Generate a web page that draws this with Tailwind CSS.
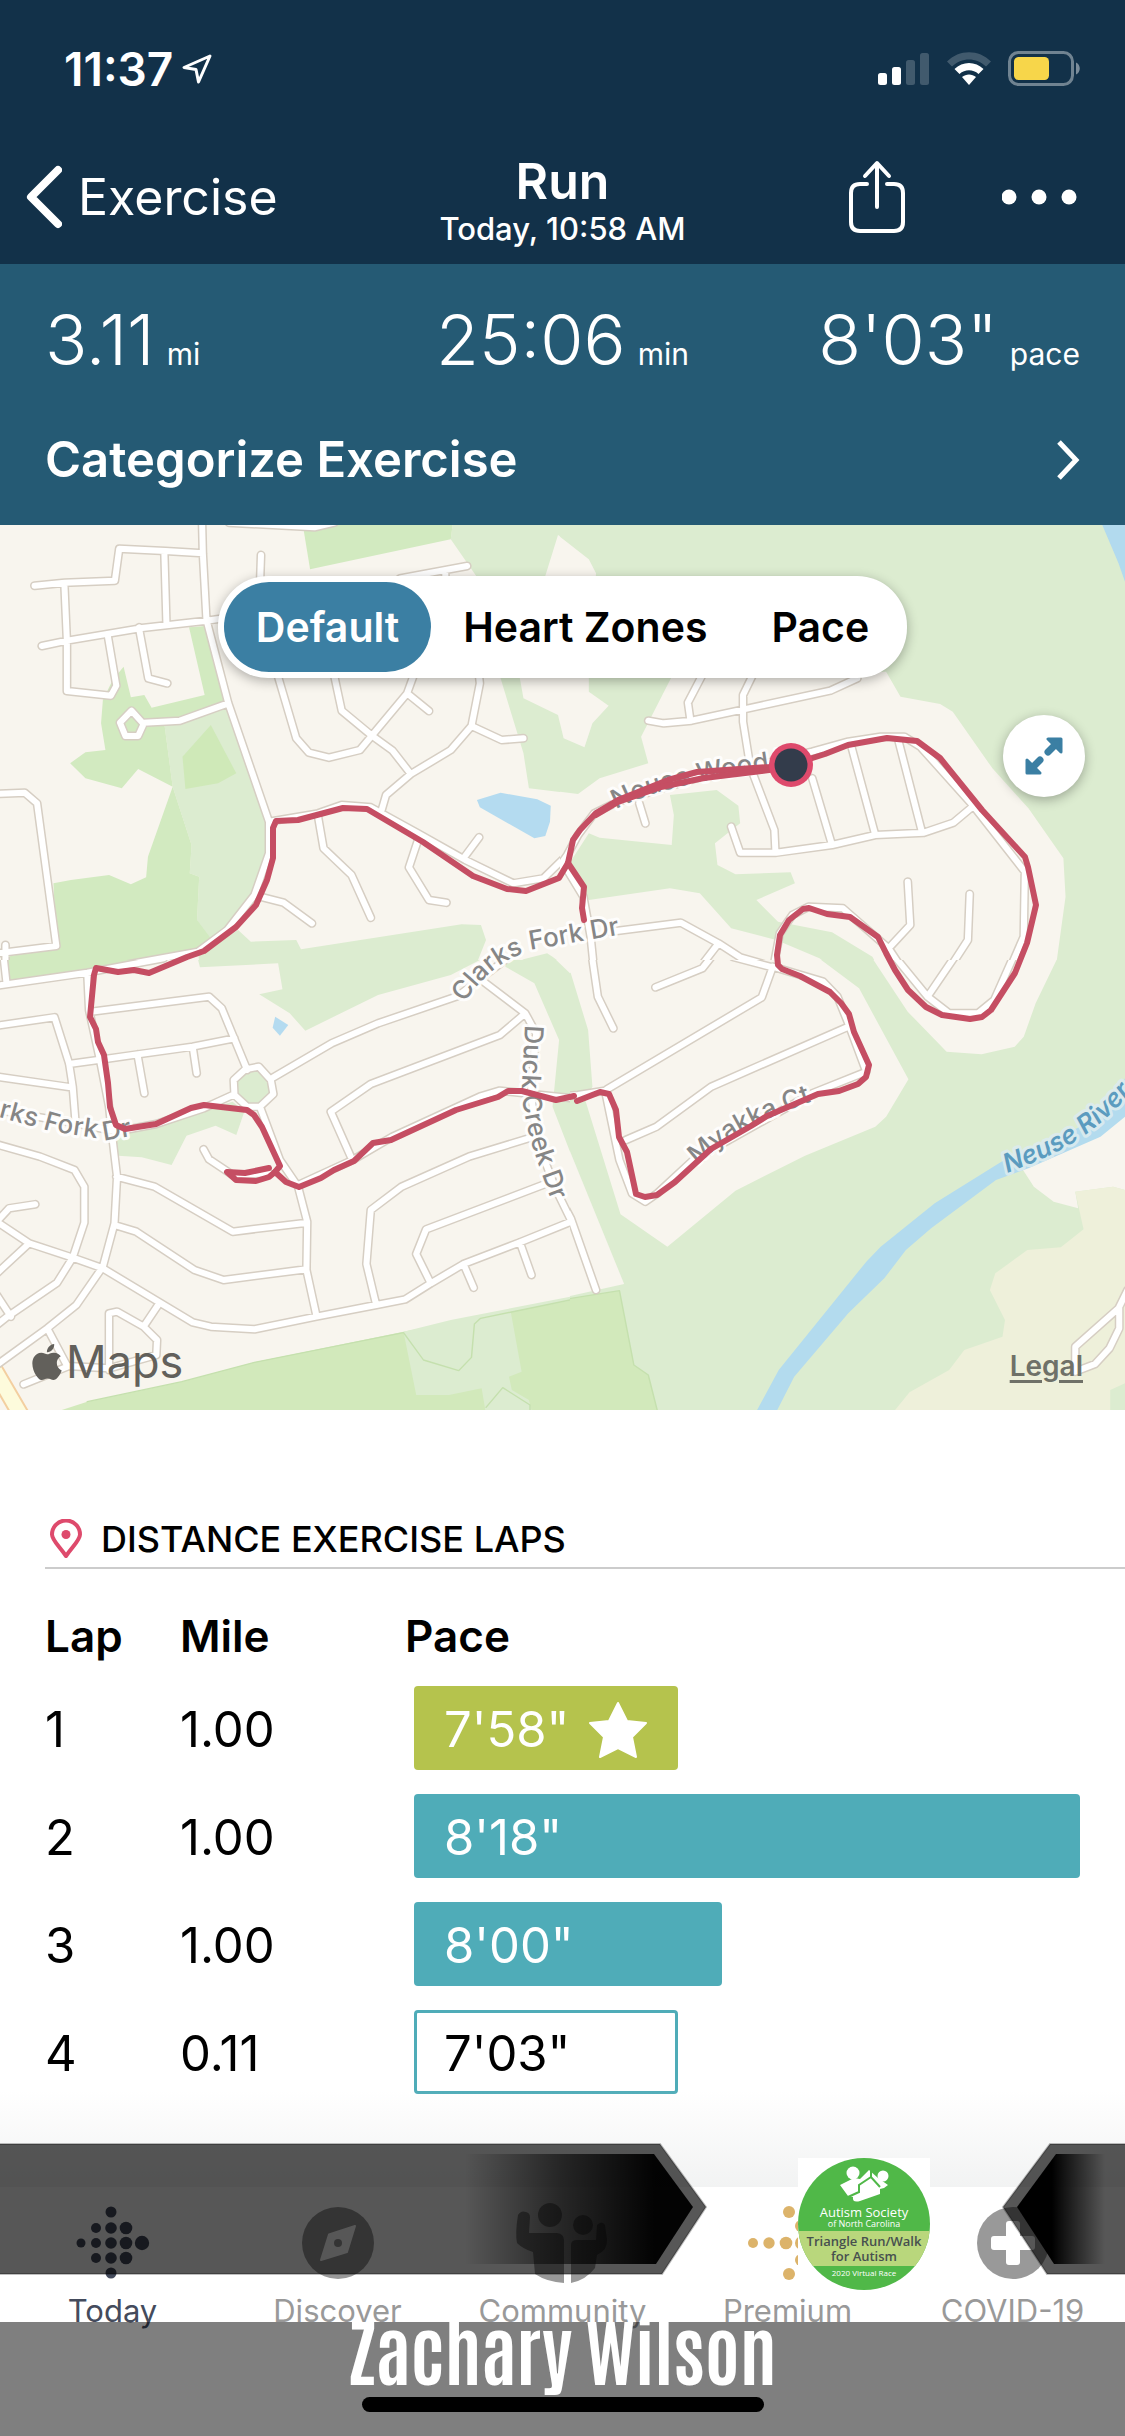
<!DOCTYPE html>
<html lang="en">

<head>
    <meta charset="UTF-8" />
    <meta name="viewport" content="width=device-width, initial-scale=1.0" />
    <title>Run - Exercise</title>
    <script src="https://cdn.jsdelivr.net/npm/@tailwindcss/browser@4"></script>
</head>

<body class="bg-white text-black min-h-screen flex flex-col overflow-x-hidden font-['Inter','Liberation_Sans',sans-serif]">

    <!-- header -->
    <header class="bg-[#123149] text-white">
        <!-- status bar -->
        <div class="h-[137px] pl-16 pr-11 flex items-center justify-between">
            <div class="flex items-center gap-2">
                <span class="text-[46px] leading-none font-semibold">11:37</span>
                <svg class="w-8 h-8" viewBox="0 0 32 32" fill="none" stroke="white" stroke-width="3" stroke-linejoin="round">
                    <path d="M29 3 3 14.500 15 16.500 17.500 29Z" />
                </svg>
            </div>
            <div class="flex items-center gap-4">
                <svg class="w-[52px] h-8" viewBox="0 0 52 32" fill="white">
                    <rect x="0" y="20" width="9" height="12" rx="2.500" />
                    <rect x="14" y="14" width="9" height="18" rx="2.500" />
                    <rect x="28" y="7" width="9" height="25" rx="2.500" opacity=".2" />
                    <rect x="42" y="0" width="9" height="32" rx="2.500" opacity=".2" />
                </svg>
                <svg class="w-[46px] h-[34px]" viewBox="0 0 46 34" fill="white">
                    <path d="M1 9.500C13-3 33-3 45 9.500L40 14.500C30.500 5 15.500 5 6 14.500Z" opacity=".2" />
                    <path d="M8.500 17C16.500 9 29.500 9 37.500 17L32.500 22C27 17 19 17 13.500 22Z" />
                    <path d="M16 25C20 21.500 26 21.500 30 25L23 33Z" />
                </svg>
                <svg class="w-[73px] h-[35px]" viewBox="0 0 73 35">
                    <rect x="1.500" y="1.500" width="63" height="32" rx="9" fill="none" stroke="white" stroke-opacity=".4" stroke-width="3" />
                    <rect x="6" y="6" width="35" height="23" rx="4.500" fill="#f7d64a" />
                    <path d="M68 11.500c5 2 5 10 0 12Z" fill="white" opacity=".45" />
                </svg>
            </div>
        </div>

        <!-- title bar -->
        <nav class="h-[127px] px-6 pb-2 grid grid-cols-3 items-center">
            <a href="#" class="flex items-center gap-4 text-[50px] leading-[56px]">
                <svg class="w-[38px] h-16" viewBox="0 0 38 64" fill="none" stroke="white" stroke-width="8" stroke-linecap="round" stroke-linejoin="round">
                    <path d="M34 5 7 32 34 59" />
                </svg>
                Exercise
            </a>
            <div class="pt-2 text-center">
                <h1 class="text-[50px] leading-[56px] font-semibold">Run</h1>
                <p class="text-[31px] leading-10 font-medium">Today, 10:58 AM</p>
            </div>
            <div class="pr-6 flex items-center justify-end gap-24">
                <button type="button" aria-label="Share">
                    <svg class="w-[58px] h-[74px]" viewBox="0 0 58 74" fill="none" stroke="white" stroke-width="4" stroke-linecap="round" stroke-linejoin="round">
                        <path d="M19 24H12Q3 24 3 33V62Q3 71 12 71H46Q55 71 55 62V33Q55 24 46 24H39" />
                        <path d="M29 47V4M17 16 29 3 41 16" />
                    </svg>
                </button>
                <button type="button" aria-label="More">
                    <svg class="w-[75px] h-4" viewBox="0 0 75 16" fill="white">
                        <circle cx="7" cy="8" r="7.500" />
                        <circle cx="37" cy="8" r="7.500" />
                        <circle cx="67" cy="8" r="7.500" />
                    </svg>
                </button>
            </div>
        </nav>
    </header>

    <!-- stats -->
    <section class="bg-[#255a74] text-white pt-9 pb-[37px] px-[45px]">
        <div class="h-20 grid grid-cols-3 text-[70px] leading-[80px] font-[350]">
            <p>3.11<span class="text-[30px] font-normal ml-3">mi</span></p>
            <p class="text-center">25:06<span class="text-[30px] font-normal ml-3">min</span></p>
            <p class="text-right">8'03"<span class="text-[30px] font-normal ml-3">pace</span></p>
        </div>
        <a href="#" class="mt-[52px] flex items-center justify-between text-[49px] leading-[56px] font-semibold">
            Categorize Exercise
            <svg class="w-6 h-10" viewBox="0 0 24 40" fill="none" stroke="white" stroke-width="5">
                <path d="M3 2 20 20 3 38" />
            </svg>
        </a>
    </section>

    <!-- map -->
    <section class="relative">
        <svg class="w-full block" viewBox="0 0 1125 885">
            <defs>
                <!-- roads per tile, drawn once as casing and once as fill -->
                <path id="roads-nw" vector-effect="non-scaling-stroke"
                    d="M95 197 178 188 316 182 328 86 455 93 558 100M556 10 558 100 568 300 628 550 740 905V1000L700 1125 625 1230 545 1295 240 1355M452 93 458 315M115 378 185 362 385 325 568 302 660 288M177 190 184 362V513L305 527 320 497 297 350M382 322 408 475 460 490M362 572 330 608 345 648H380L395 612ZM395 608 495 602 628 550M718 105 715 200M630 8 865 22 920 8M1285 138 1100 175M1225 155V190M765 470 815 655 850 698 905 713 990 690 1023 647 1120 520 1140 460M920 470 940 572 1023 647 1080 692 1130 762M1120 520 1180 573M1318 470 1320 490 1297 618 1240 690 1130 762 1062 825 1050 870M1297 618 1380 660 1440 655M740 905 875 880 940 855 1020 862 1150 940 1280 1020 1412 1090 1495 1075 1570 995M1275 1015 1318 952M875 890 890 985 967 1065 1020 1193M1150 960 1125 1042 1180 1140 1228 1148M715 1130 780 1148 858 1210M-9 822 68 818 102 850 155 1278 -9 1300M15 1275V1355" />
                <path id="roads-ne" vector-effect="non-scaling-stroke"
                    d="M245 602 288 610 365 602 510 568 750 512 825 475M395 465 355 548 362 602M535 465 508 525V605L528 740 595 930 598 998M-9 1050 20 1005 50 945 95 880 160 845 400 768 520 745 640 710 700 695 800 665 890 650H955L1000 680 1145 855 1290 1055 1287 1250 1245 1355M220 850 237 910M475 920 500 998H600L755 975 875 945 1010 938 1092 908 1145 860M700 775 755 975M810 685 875 945M940 665 1005 938M965 1085 972 1215 912 1285M955 1355 912 1285 785 1165 690 1160 645 1185 610 1240 590 1355M1137 1122 1132 1260 1075 1355M140 1235 335 1208 440 1270 500 1312 590 1340M440 1270 390 1340 355 1355M20 1050 65 1130 85 1250 95 1355" />
                <path id="roads-se" vector-effect="non-scaling-stroke"
                    d="M89 -9 105 110 148 205M265 82 395 25 420 -9M480 -9 590 22 560 112 130 388M183 540 268 500 420 380 800 200M-9 410 50 405 125 392 165 600 200 700 237 725 270 700 370 600 700 400 850 335 800 190 770 110 730 65 590 20M930 -9 1020 110 1080 160H1160L1205 120 1258 -9M1020 110 1095 -9M-9 695 30 775 100 990M-9 795 30 775M1575 990 1550 1045 1430 1160V1235L1485 1212 1525 1165 1552 1105V1045" />
                <path id="roads-sw" vector-effect="non-scaling-stroke"
                    d="M-9 77 240 38 450 -5M10 -9 18 70M-9 197 150 172 190 310 200 380 208 490M-9 350 195 382M190 312 270 300 380 283 530 260 645 235M240 38 245 150 275 300 300 440 310 540 322 650 315 790 283 920 210 1035 130 1105 -9 1215M250 155 575 110 610 145 680 330M378 283 397 400M530 260 541 340M675 328 712 320 745 360 752 402 715 440H680L645 405 643 360ZM640 405 560 445 430 492 320 515 208 490 -9 450M752 352 912 250 1040 190 1260 108 1400 -9M715 440 770 600 820 680 845 785 843 930 870 1065M965 590 910 455 1020 372 1375 225 1445 160 1330 65M1445 160 1475 220 1460 400 1480 550 1530 690 1575 790M560 568 575 598 640 645 740 640M820 675 970 600 1080 530 1320 410 1375 392 1575 415M320 650 425 680 640 815 845 788M315 795 375 815 535 930 615 960 843 928M-9 553 110 590 205 630 232 680V788L200 893 157 968 20 1070 -9 1095M97 733 25 745 -9 785 80 850 200 893 283 925 530 1087 580 1100 700 1108 870 1070 1035 1035 1115 1018 1185 970 1275 912 1430 847 1575 783M-9 940 80 850M-9 1005 30 1070M435 1035 395 1100M300 1230V1060L322 1055 395 1100 432 1140 430 1185 300 1225 185 1218 130 1105M65 1273 185 1220M1035 1035 1008 912 1020 750 1105 680 1290 590 1475 528M1185 970 1145 882 1172 808 1510 668M1275 912 1303 983M1430 847 1462 945" />
            </defs>

            <!-- north west tile -->
            <svg x="0" y="-5" width="570" height="450" viewBox="0 0 1568 1350" preserveAspectRatio="none" stroke-linecap="round" stroke-linejoin="round">
                <rect width="1568" height="1350" fill="#f8f5ee" />
                <g fill="#dcecd0">
                    <path d="M1245 15H1568V70L1535 45 1500 168 1430 475 1440 535 1535 585 1550 655 1568 662V820L1455 805 1440 700 1377 475 1310 168 1240 58Z" />
                    <path d="M453 618 628 552 740 910V1000L715 1110 640 1230 560 1300 542 1200 548 1070 522 1060 527 975 475 800Z" />
                    <path d="M655 1230 690 1265 815 1260 828 1288 1270 1213 1323 1215 1337 1260 1315 1320 1230 1350H765V1330L550 1345 545 1300Z" />
                    <path d="M1390 1350 1440 1318 1505 1300 1520 1310 1568 1350Z" />
                </g>
                <g fill="#d2eac0">
                    <path d="M833 15H1245L1240 58 853 148Z" />
                    <path d="M340 440 360 532 397 525 417 563 563 525 520 322 565 318 628 552 500 612 453 618 475 800 380 747 335 805 235 775 193 730 235 697 290 690 278 610 283 540 310 480Z" />
                    <path d="M475 800 527 975 522 1060 548 1070 542 1200 590 1270 420 1350H20V1310L155 1280 147 1090 195 1080 300 1065 360 1093 402 1072 407 1010Z" />
                    <path d="M580 615 650 760 600 790 510 807 502 710Z" fill="#cfe9b8" />
                </g>
                <path d="M1312 840 1377 818 1478 838 1515 857 1513 905 1500 948 1470 955 1320 862Z" fill="#b4dbf0" />
                <use href="#roads-nw" fill="none" stroke="#d6cec3" stroke-width="9" />
                <use href="#roads-nw" fill="none" stroke="#fff" stroke-width="6" />
            </svg>

            <!-- north east tile -->
            <svg x="560" y="-5" width="565" height="450" viewBox="0 0 1568 1350" preserveAspectRatio="none" stroke-linecap="round" stroke-linejoin="round">
                <rect width="1568" height="1350" fill="#dcecd0" />
                <g fill="#f8f5ee">
                    <path d="M0 50 80 118 100 160 80 470V515L135 557 90 610 68 682 10 655 0 610Z" />
                    <path d="M310 470 905 455 945 530 1055 552 1090 575 1200 745 1300 865 1397 1015 1403 1130 1375 1350H0V815L50 822 110 775 245 730 225 650Z" />
                </g>
                <g fill="#dcecd0">
                    <path d="M435 810 495 857 500 910 430 970 437 1035 487 1063 640 1057 652 1090 545 1140 605 1205 755 1237 867 1310 887 1350H765L720 1315 600 1260 475 1225 388 1120 305 1105 80 1140 20 1040 80 940 110 953 310 975 316 885 305 825Z" />
                    <path d="M0 1330 25 1350H0Z" />
                </g>
                <path d="M1503 10H1568V185L1550 130Z" fill="#b2daee" />
                <use href="#roads-ne" fill="none" stroke="#d6cec3" stroke-width="9" />
                <use href="#roads-ne" fill="none" stroke="#fff" stroke-width="6" />
            </svg>

            <!-- south east tile -->
            <svg x="560" y="435" width="565" height="450" viewBox="0 0 1568 1350" preserveAspectRatio="none" stroke-linecap="round" stroke-linejoin="round">
                <rect width="1568" height="1350" fill="#dcecd0" />
                <g fill="#f8f5ee">
                    <path d="M0 500 178 972 0 1015Z" />
                    <path d="M0 0H725L830 85 967 358 905 470 875 500 680 587 487 692 298 860 168 763 70 420 90 380 78 210 30 40 0 10Z" />
                    <path d="M870 0H1378L1320 130 1287 230 1262 260 1170 283 1073 275 965 155Z" />
                    <path d="M1285 630 1568 460V690L1535 680 1430 695 1438 745 1370 725 1315 680Z" />
                </g>
                <path d="M1430 695 1535 680 1568 690V1270L1527 1290V1350H930L970 1297 1080 1230 1122 1170 1228 1130 1235 1080 1193 990 1208 940 1297 870 1390 862 1453 808Z" fill="#eef0da" />
                <path d="M547 1350 607 1230 850 905 890 860 1040 730 1225 605 1380 535 1480 480 1540 410 1568 355V470L1500 530 1300 625 1210 660 1030 805 960 870 900 955 800 1060 650 1250 603 1350Z" fill="#b3dbee" />
                <path d="M-9 1022 165 992 205 1215 245 1245 272 1360H-9Z" fill="#d2e9bb" stroke="#c5e0ae" stroke-width="4" />
                <use href="#roads-se" fill="none" stroke="#d6cec3" stroke-width="9" />
                <use href="#roads-se" fill="none" stroke="#fff" stroke-width="6" />
            </svg>

            <!-- south west tile -->
            <svg x="0" y="435" width="570" height="450" viewBox="0 0 1568 1350" preserveAspectRatio="none" stroke-linecap="round" stroke-linejoin="round">
                <rect width="1568" height="1350" fill="#f8f5ee" />
                <path d="M20 0H450L240 32 20 65Z" fill="#d2eac0" />
                <g fill="#dcecd0">
                    <path d="M545 0H1320L1240 45 1040 105 840 212 797 160 713 103 777 88 765 10 550 22Z" />
                    <path d="M1395 0 1390 20 1470 70 1538 240 1520 440 1568 575V40L1530 0Z" />
                    <path d="M675 330H712L745 365 748 402 712 440H680L645 405V360Z" />
                    <path d="M318 520 345 510 440 490 640 425 672 455 650 525 593 497 513 527 472 615 390 592 325 587Z" />
                </g>
                <path d="M757 170 793 195 770 227 750 203Z" fill="#b4dbf0" />
                <path d="M170 1350 240 1325 500 1265 700 1207 1110 1115 1568 1015V1350Z" fill="#d2e9bb" />
                <path d="M1110 1115 1240 1080 1568 1010V1022L1405 1055 1435 1235 1400 1250 1408 1290 1455 1320 1462 1350H1335L1325 1285 1235 1305H1145Z" fill="#dcecd0" />
                <path d="M700 1207 1110 1118 1165 1200 1262 1232 1297 1192 1305 1092 1322 1075 1568 1020M240 1325 500 1265 700 1207M1337 1342 1383 1283 1458 1335V1350" fill="none" stroke="#c5e0ae" stroke-width="4" />
                <path d="M-20 1220 60 1370" vector-effect="non-scaling-stroke" stroke="#f3cfa0" stroke-width="18" />
                <path d="M-20 1220 60 1370" vector-effect="non-scaling-stroke" stroke="#fdfbdc" stroke-width="14" />
                <use href="#roads-sw" fill="none" stroke="#d6cec3" stroke-width="9" />
                <use href="#roads-sw" fill="none" stroke="#fff" stroke-width="6" />
            </svg>

            <!-- street names -->
            <defs>
                <path id="clarks" d="M464 478C485 448 505 433 535 424L640 406" />
                <path id="clarks-west" d="M-16 588 50 606 108 615 160 606" />
                <path id="duck" d="M525 500 522 560C522 590 530 620 557 690" />
                <path id="wood" d="M616 284C660 262 720 250 840 236" />
                <path id="myakka" d="M697 640C735 605 770 590 840 567" />
                <path id="river" d="M1007 648C1060 627 1095 615 1150 545" />
            </defs>
            <g font-size="26" font-weight="500" fill="#868686" stroke="#fff" stroke-opacity=".9" stroke-width="6" stroke-linejoin="round" paint-order="stroke">
                <text><textPath href="#clarks">Clarks Fork Dr</textPath></text>
                <text><textPath href="#clarks-west">arks Fork Dr</textPath></text>
                <text><textPath href="#duck">Duck Creek Dr</textPath></text>
                <text><textPath href="#wood">Neuse Wood Dr</textPath></text>
                <text><textPath href="#myakka">Myakka Ct</textPath></text>
                <text fill="#5b9bbf" stroke="#dcebef" font-weight="600" font-style="italic"><textPath href="#river">Neuse River</textPath></text>
            </g>

            <!-- run route -->
            <g fill="none" stroke="#c54e63" stroke-width="6" stroke-linecap="round" stroke-linejoin="round">
                <path d="M790 240 825 229 848 220 887 213 917 216 940 233 982 285 1025 332 1028 342 1036 380 1027 418 1015 448 991 485 982 492 970 494 942 490 926 482 908 465 895 445 886 428 878 412 864 402 850 392 827 389 809 383 803 384 789 395 780 410 777 430 778 440 782 444 800 451 830 467 841 478 849 489 854 507 869 540 866 552 858 559 839 566 818 569 767 591 751 601 711 624 675 657 657 670 645 672 636 669 627 627 619 612 616 585 609 569 600 567 577 576" />
                <path d="M574 571 556 575 522 566H508L498 572 456 585 391 615 373 618 354 636 334 645 321 653 299 662 286 657 275 647 269 652 256 656 236 655 227 647 245 648 269 643" />
                <path d="M275 647 280 641 262 602 254 590 247 585 204 580 191 583 156 599 125 604 116 600 110 582 108 558 104 530 98 517 96 504 90 492 94 450 96 443 118 447 134 445 149 448 187 432 204 426 236 402 256 380 267 355 273 333V303L276 296 298 295 343 283 367 284 423 317 473 351 507 364 526 366 559 353 568 338 573 315 580 305 596 288 618 275 668 255 697 247 769 242 790 240" />
                <path d="M790 241 769 245 704 253 661 262 618 277 596 290M568 338 584 362 582 383 584 395" />
            </g>
            <circle cx="791" cy="240" r="22" fill="#de4a6c" />
            <circle cx="791" cy="240" r="16.500" fill="#333c4b" />
        </svg>

        <!-- map mode -->
        <div class="absolute top-[51px] inset-x-0 flex justify-center">
            <div class="flex bg-white rounded-[50px] p-1.5 shadow-[0_3px_12px_rgba(0,0,0,.3)] text-[41px] leading-[90px] font-semibold">
                <button type="button" class="bg-[#3b7fa3] text-white rounded-[45px] px-8">Default</button>
                <button type="button" class="px-8">Heart Zones</button>
                <button type="button" class="px-8">Pace</button>
            </div>
        </div>
        <button type="button" aria-label="Expand map" class="absolute top-[190px] right-10 size-[82px] rounded-full bg-white grid place-items-center shadow-[0_3px_12px_rgba(0,0,0,.3)]">
            <svg class="size-10" viewBox="0 0 40 40" fill="#3b7fa3" stroke="#3b7fa3" stroke-linecap="round" stroke-linejoin="round">
                <path d="M24 16 32 8M16 24 8 32" stroke-width="7" />
                <path d="M24 3H37V16ZM3 24V37H16Z" stroke-width="3" />
            </svg>
        </button>
        <div class="absolute bottom-4 left-8 flex items-center gap-1 text-[#62605b]">
            <svg class="w-[30px] h-9" viewBox="2 0 20 24" fill="currentColor" preserveAspectRatio="none">
                <path d="M12.152 6.896c-.948 0-2.415-1.078-3.960-1.040-2.040.027-3.910 1.183-4.961 3.014-2.117 3.675-.546 9.103 1.519 12.090 1.013 1.454 2.208 3.090 3.792 3.039 1.520-.065 2.090-.987 3.935-.987 1.831 0 2.350.987 3.960.948 1.637-.026 2.676-1.480 3.676-2.948 1.156-1.688 1.636-3.325 1.662-3.415-.039-.013-3.182-1.221-3.220-4.857-.026-3.040 2.480-4.494 2.597-4.559-1.429-2.090-3.623-2.324-4.390-2.376-2-.156-3.675 1.090-4.610 1.090zM15.530 3.830c.843-1.012 1.400-2.427 1.245-3.830-1.207.052-2.662.805-3.532 1.818-.780.896-1.454 2.338-1.273 3.714 1.338.104 2.715-.688 3.559-1.701" />
            </svg>
            <span class="text-[45px] leading-[64px]">Maps</span>
        </div>
        <a href="#" class="absolute bottom-6 right-[42px] text-[28px] leading-10 font-semibold text-[#6f7168] underline decoration-[3px] underline-offset-4">Legal</a>
    </section>

    <!-- laps -->
    <main class="flex-1 pl-[45px] pt-[109px]">
        <h2 class="flex items-center gap-4 pb-2 border-b-2 border-[#ccc] text-[36px] leading-10 font-medium">
            <svg class="w-10 h-10" viewBox="0 0 40 40" fill="none" stroke="#de4a6c" stroke-width="4" stroke-linejoin="round">
                <path d="M21 37C14 27 7 21 7 15.500A14 14 0 0 1 35 15.500C35 21 28 27 21 37Z" />
                <circle cx="21" cy="15.500" r="4.500" fill="#de4a6c" stroke="none" />
            </svg>
            DISTANCE EXERCISE LAPS
        </h2>
        <table class="w-full text-left text-[49px] leading-[56px]">
            <thead class="text-[44px]">
                <tr class="h-[105px]">
                    <th class="w-[135px] pt-7 font-semibold">Lap</th>
                    <th class="w-[225px] pt-7 font-semibold">Mile</th>
                    <th class="pt-7 font-semibold">Pace</th>
                </tr>
            </thead>
            <tbody>
                <tr class="h-[108px]">
                    <td class="pt-1">1</td>
                    <td class="pt-1">1.00</td>
                    <td class="pl-[9px] pr-[45px]">
                        <div class="h-[84px] pt-1 pl-[30px] flex items-center gap-5 rounded-sm bg-[#b5c34d] text-white" style="width: 39.6%">7'58"
                            <svg class="w-[58px] h-[58px] shrink-0" viewBox="0 0 58 58" fill="white" stroke="white" stroke-width="2" stroke-linejoin="round">
                                <path d="M29 2 38 20 57 22 43 36 47 56 29 47 11 56 15 36 1 22 20 20Z" />
                            </svg>
                        </div>
                    </td>
                </tr>
                <tr class="h-[108px]">
                    <td class="pt-1">2</td>
                    <td class="pt-1">1.00</td>
                    <td class="pl-[9px] pr-[45px]">
                        <div class="h-[84px] pt-1 pl-[30px] flex items-center rounded-sm bg-[#4facb8] text-white" style="width: 100%">8'18"</div>
                    </td>
                </tr>
                <tr class="h-[108px]">
                    <td class="pt-1">3</td>
                    <td class="pt-1">1.00</td>
                    <td class="pl-[9px] pr-[45px]">
                        <div class="h-[84px] pt-1 pl-[30px] flex items-center rounded-sm bg-[#4facb8] text-white" style="width: 46.2%">8'00"</div>
                    </td>
                </tr>
                <tr class="h-[108px]">
                    <td class="pt-1">4</td>
                    <td class="pt-1">0.11</td>
                    <td class="pl-[9px] pr-[45px]">
                        <div class="h-[84px] pt-1 pl-[27px] flex items-center rounded-sm border-3 border-[#4facb8]" style="width: 39.6%">7'03"</div>
                    </td>
                </tr>
            </tbody>
        </table>
    </main>

    <!-- tab bar -->
    <footer class="relative mt-auto h-[249px] bg-white">
        <div class="absolute inset-x-0 bottom-full h-[97px] bg-linear-to-b from-white/0 to-[#f2f3f3]"></div>

        <nav class="pt-4 grid grid-cols-5 text-center text-[31px] leading-10 text-[#999]">
            <a href="#" class="flex flex-col items-center gap-2 text-[#444b5c]">
                <svg class="size-20" viewBox="0 0 80 80" fill="currentColor">
                    <circle cx="8" cy="40" r="4.500" />
                    <circle cx="23" cy="25" r="5" /><circle cx="23" cy="40" r="5" /><circle cx="23" cy="55" r="5" />
                    <circle cx="38" cy="9" r="5.500" /><circle cx="38" cy="25" r="5.800" /><circle cx="38" cy="40" r="5.800" /><circle cx="38" cy="55" r="5.800" /><circle cx="38" cy="70" r="5.500" />
                    <circle cx="53" cy="25" r="6.300" /><circle cx="53" cy="40" r="6.300" /><circle cx="53" cy="55" r="6.300" />
                    <circle cx="69" cy="40" r="7.200" />
                </svg>
                Today
            </a>
            <a href="#" class="flex flex-col items-center gap-2">
                <svg class="size-20" viewBox="0 0 80 80" fill="currentColor">
                    <circle cx="40" cy="40" r="36" />
                    <path d="M57 23 31 31.500 23 57 49 49Z" fill="white" stroke="white" stroke-width="2" stroke-linejoin="round" />
                    <circle cx="40" cy="40" r="4" />
                </svg>
                Discover
            </a>
            <a href="#" class="flex flex-col items-center gap-2">
                <svg class="w-24 h-20" viewBox="0 0 96 80" fill="currentColor">
                    <circle cx="35" cy="12" r="12" />
                    <path d="M3 12Q6 7 11 9Q15 10 15 14L14 30H42Q49 31 49 37V80Q32 79 20 71L18 49Q8 46 2 40Q0 30 3 12Z" />
                    <circle cx="68" cy="22" r="10" />
                    <path d="M56 42Q56 37 62 37H81L82 22Q87 17 90 22L92 36Q93 47 82 52L80 65Q71 77 56 80Z" />
                </svg>
                Community
            </a>
            <a href="#" class="flex flex-col items-center gap-2">
                <svg class="size-20" viewBox="0 0 80 80" fill="#dcb36a">
                    <circle cx="5" cy="40" r="5" /><circle cx="21" cy="40" r="5.700" /><circle cx="38" cy="40" r="6.300" /><circle cx="54" cy="40" r="7" />
                    <circle cx="41" cy="9" r="6" /><circle cx="41" cy="71" r="6" />
                    <circle cx="53" cy="23" r="6" /><circle cx="53" cy="57" r="6" />
                </svg>
                Premium
            </a>
            <a href="#" class="flex flex-col items-center gap-2">
                <svg class="size-20" viewBox="0 0 80 80" fill="currentColor">
                    <circle cx="40" cy="40" r="36" />
                    <rect x="33" y="18" width="14" height="44" rx="3" fill="white" />
                    <rect x="18" y="33" width="44" height="14" rx="3" fill="white" />
                </svg>
                COVID-19
            </a>
        </nav>

        <!-- race banner -->
        <svg class="absolute inset-x-0 -top-11 w-full pointer-events-none" viewBox="0 0 1125 150">
            <defs>
                <linearGradient id="fade-left" gradientUnits="userSpaceOnUse" x1="465" x2="655">
                    <stop offset="0" stop-opacity="0" />
                    <stop offset=".5" stop-opacity=".55" />
                    <stop offset="1" stop-opacity=".97" />
                </linearGradient>
                <linearGradient id="fade-right" gradientUnits="userSpaceOnUse" x1="1052" x2="1105">
                    <stop offset="0" />
                    <stop offset="1" stop-opacity="0" />
                </linearGradient>
                <clipPath id="round">
                    <circle cx="864" cy="81" r="66" />
                </clipPath>
            </defs>
            <g fill-opacity=".66" stroke="#000" stroke-opacity=".25" stroke-width="2">
                <path d="M-5 1H660L706 64 662 131H-5Z" />
                <path d="M1130 1H1050L1003 64 1047 131H1130Z" />
            </g>
            <path d="M465 11H654L693 64 656 121H465Z" fill="url(#fade-left)" />
            <path d="M1105 11H1056L1017 64 1054 121H1105Z" fill="url(#fade-right)" />

            <rect x="798" y="15" width="132" height="132" fill="white" />
            <g clip-path="url(#round)">
                <rect x="798" y="15" width="132" height="132" fill="#50b848" />
                <rect x="798" y="88" width="132" height="35" fill="#b9d77c" />
            </g>
            <g fill="white">
                <circle cx="853" cy="30" r="6.500" />
                <circle cx="883" cy="33" r="5.500" />
                <path d="M840 42 854 35 860 36 869 27 878 35 888 42 884 45 880 46V51L860 58Q852 60 853 54L848 53Z" />
            </g>
            <path d="M848 54 859 49V42L871 34 880 44M871 34V27" fill="none" stroke="#50b848" stroke-width="2" />
            <g font-family="'Open Sans', sans-serif" text-anchor="middle" fill="white">
                <text x="864" y="74" font-size="13">Autism Society</text>
                <text x="864" y="84" font-size="9">of North Carolina</text>
                <text x="864" y="103" font-size="13" font-weight="600" fill="#47504f">Triangle Run/Walk</text>
                <text x="864" y="118" font-size="13" font-weight="600" fill="#47504f">for Autism</text>
                <text x="864" y="133" font-size="8">2020 Virtual Race</text>
            </g>
        </svg>
        <div class="absolute inset-x-0 bottom-0 h-[114px] overflow-hidden bg-black/50 flex flex-col items-center">
            <p class="h-[75px] text-[74px] leading-[52px] font-bold text-white whitespace-nowrap font-['Antonio','Roboto_Condensed','Open_Sans_Condensed','Liberation_Sans',sans-serif]">Zachary Wilson</p>
            <div class="relative w-[402px] h-[15px] rounded-full bg-black"></div>
        </div>
    </footer>

</body>

</html>
